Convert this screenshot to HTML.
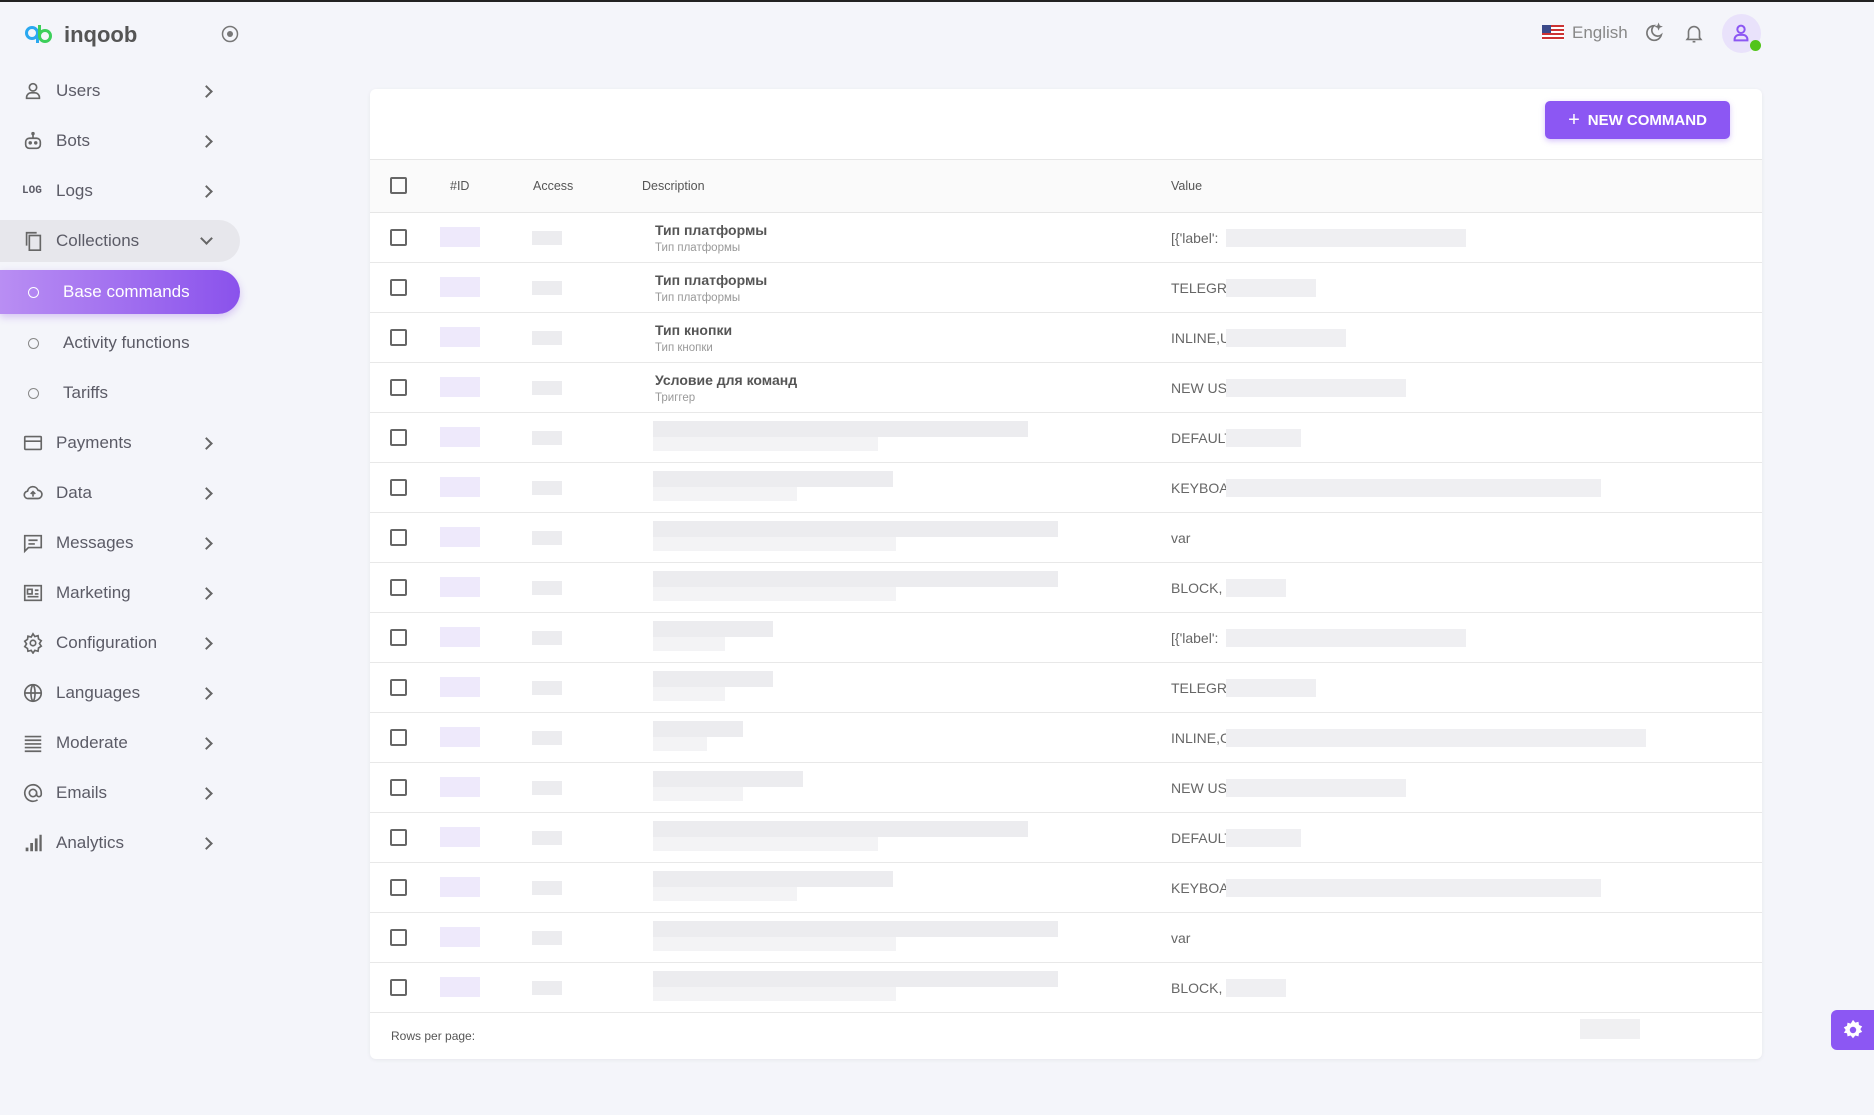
<!DOCTYPE html>
<html><head><meta charset="utf-8"><style>
*{box-sizing:border-box;margin:0;padding:0}
body{width:1874px;height:1115px;background:#f4f5fa;font-family:"Liberation Sans","Noto Sans CJK SC",sans-serif;position:relative;overflow:hidden;color:#4b4b55}
.topline{position:absolute;left:0;top:0;width:1874px;height:2px;background:#222}
.logo{position:absolute;left:24px;top:22px;display:flex;align-items:center;gap:10px;font-weight:bold;font-size:22px;color:#555}
.nav{position:absolute;left:0;top:66px;width:240px}
.it{height:50px;display:flex;align-items:center;padding-left:22px;font-size:17px;color:#5b5b66;position:relative}
.it svg{width:22px;height:22px;margin-right:12px}
.it .ch{position:absolute;left:202px;top:21px;width:9px;height:9px;border-right:2px solid #666;border-top:2px solid #666;transform:rotate(45deg)}
.coll{background:#e7e7ec;border-radius:0 25px 25px 0;height:42px;margin:4px 0}
.coll .ch{transform:rotate(135deg);top:14px}
.base{background:linear-gradient(90deg,#b98ef3,#8a52ec);border-radius:0 26px 26px 0;height:44px;color:#fff;box-shadow:0 3px 8px rgba(140,80,230,.3);margin:8px 0 4px}
.sub{padding-left:28px}
.sub .dot{width:11px;height:11px;border:1.5px solid #888;border-radius:50%;margin-right:24px}
.base .dot{border-color:#fff}
.card{position:absolute;left:370px;top:89px;width:1392px;height:970px;background:#fff;border-radius:6px;box-shadow:0 1px 4px rgba(0,0,0,.06)}
.btn{position:absolute;left:1175px;top:12px;width:185px;height:38px;background:#8c57f3;border-radius:5px;color:#fff;font-weight:bold;font-size:15px;display:flex;align-items:center;justify-content:center;gap:8px;box-shadow:0 2px 6px rgba(140,87,243,.35)}
.thead{position:absolute;left:0;top:70px;width:1392px;height:54px;background:#fafafa;border-top:1px solid #e6e6e6;border-bottom:1px solid #e6e6e6;font-size:12.5px;color:#555}
.thead span{position:absolute;top:19px}
.cb{position:absolute;left:20px;width:17px;height:17px;border:2px solid #666;border-radius:2px}
.row{position:absolute;left:0;width:1392px;height:50px;border-bottom:1px solid #e8e8e8;font-size:14px}
.t1{position:absolute;left:285px;top:9px;font-weight:bold;color:#555;font-size:14px}
.t2{position:absolute;left:285px;top:29px;color:#999;font-size:11.5px}
.val{position:absolute;left:801px;top:17px;color:#666;font-size:14px}
.b{position:absolute;background:#ececef}
.footer{position:absolute;left:21px;top:940px;font-size:12px;color:#555}
</style></head><body>
<div class="topline"></div>
<div class="logo"><svg width="30" height="24" viewBox="0 0 30 24"><circle cx="8" cy="10" r="5.5" fill="none" stroke="#2aa8f0" stroke-width="3"/><path d="M13.5 10v10" stroke="#2aa8f0" stroke-width="3"/><circle cx="21" cy="13" r="5.5" fill="none" stroke="#3ccf5a" stroke-width="3"/><path d="M15.5 2v11" stroke="#3ccf5a" stroke-width="3"/></svg>inqoob</div>
<svg style="position:absolute;left:221px;top:25px" width="18" height="18" viewBox="0 0 18 18"><circle cx="9" cy="9" r="7.5" fill="none" stroke="#777" stroke-width="1.5"/><circle cx="9" cy="9" r="3" fill="#777"/></svg>
<div class="nav">
<div class="it"><svg viewBox="0 0 24 24" fill="none" stroke="#666" stroke-width="1.8"><circle cx="12" cy="8" r="4"/><path d="M5 20v-1a5 5 0 015-5h4a5 5 0 015 5v1z"/></svg>Users<i class="ch"></i></div>
<div class="it"><svg viewBox="0 0 24 24" fill="none" stroke="#666" stroke-width="1.8"><rect x="4" y="9" width="16" height="11" rx="4"/><path d="M12 9V5"/><circle cx="12" cy="4" r="1"/><circle cx="9" cy="14" r="1" fill="#666"/><circle cx="15" cy="14" r="1" fill="#666"/></svg>Bots<i class="ch"></i></div>
<div class="it"><span style="font-size:11px;font-weight:bold;font-family:'Liberation Mono',monospace;width:22px;margin-right:12px">LOG</span>Logs<i class="ch"></i></div>
<div class="it coll"><svg viewBox="0 0 24 24" fill="none" stroke="#666" stroke-width="1.8"><path d="M5 17V3h11"/><rect x="8" y="6" width="12" height="16"/></svg>Collections<i class="ch"></i></div>
<div class="it sub base"><i class="dot"></i>Base commands</div>
<div class="it sub"><i class="dot"></i>Activity functions</div>
<div class="it sub"><i class="dot"></i>Tariffs</div>
<div class="it"><svg viewBox="0 0 24 24" fill="none" stroke="#666" stroke-width="1.8"><rect x="3" y="5" width="18" height="14" rx="1"/><path d="M3 10h18"/></svg>Payments<i class="ch"></i></div>
<div class="it"><svg viewBox="0 0 24 24" fill="none" stroke="#666" stroke-width="1.8"><path d="M7 18a4 4 0 01-1-8 6 6 0 0111.5-1A4.5 4.5 0 0117 18z"/><path d="M12 16v-5M9.5 13l2.5-2.5 2.5 2.5"/></svg>Data<i class="ch"></i></div>
<div class="it"><svg viewBox="0 0 24 24" fill="none" stroke="#666" stroke-width="1.8"><path d="M3 4h18v13H7l-4 4z"/><path d="M7 9h10M7 13h7"/></svg>Messages<i class="ch"></i></div>
<div class="it"><svg viewBox="0 0 24 24" fill="none" stroke="#666" stroke-width="1.8"><rect x="3" y="4" width="18" height="16"/><rect x="6" y="8" width="5" height="5"/><path d="M14 9h4M14 13h4M6 16h12"/></svg>Marketing<i class="ch"></i></div>
<div class="it"><svg viewBox="0 0 24 24" fill="none" stroke="#666" stroke-width="1.8"><circle cx="12" cy="12" r="3"/><path d="M12 2l2 3 3.5-1 .5 3.5 3 2-2 3 2 3-3 2-.5 3.5-3.5-1-2 3-2-3-3.5 1L6 18l-3-2 2-3-2-3 3-2 .5-3.5 3.5 1z"/></svg>Configuration<i class="ch"></i></div>
<div class="it"><svg viewBox="0 0 24 24" fill="none" stroke="#666" stroke-width="1.8"><circle cx="12" cy="12" r="9"/><path d="M3 12h18M12 3c3 3 3 15 0 18M12 3c-3 3-3 15 0 18"/></svg>Languages<i class="ch"></i></div>
<div class="it"><svg viewBox="0 0 24 24" fill="none" stroke="#666" stroke-width="1.8"><path d="M3 5h18M3 9h18M3 13h18M3 17h18M3 21h18"/></svg>Moderate<i class="ch"></i></div>
<div class="it"><svg viewBox="0 0 24 24" fill="none" stroke="#666" stroke-width="1.8"><circle cx="12" cy="12" r="4"/><path d="M16 12v1.5a2.5 2.5 0 005 0V12a9 9 0 10-4 7.5"/></svg>Emails<i class="ch"></i></div>
<div class="it"><svg viewBox="0 0 24 24" fill="#666"><rect x="4" y="17" width="3" height="4"/><rect x="9" y="12" width="3" height="9"/><rect x="14" y="7" width="3" height="14"/><rect x="19" y="3" width="2.5" height="18"/></svg>Analytics<i class="ch"></i></div>
</div>
<svg style="position:absolute;left:1542px;top:25px" width="22" height="15" viewBox="0 0 22 15"><rect width="22" height="15" fill="#fff"/><g fill="#c33"><rect y="0" width="22" height="2"/><rect y="4" width="22" height="2"/><rect y="8" width="22" height="2"/><rect y="12" width="22" height="2"/></g><rect width="9" height="8" fill="#3c4a8a"/></svg>
<div style="position:absolute;left:1572px;top:23px;font-size:17px;color:#888">English</div>
<svg style="position:absolute;left:1643px;top:21px" width="22" height="24" viewBox="0 0 24 24" fill="none" stroke="#777" stroke-width="1.8"><path d="M12 4a8 8 0 108 10 6 6 0 01-8-10z"/><path d="M17 3l.6 1.5L19 5l-1.4.5L17 7l-.6-1.5L15 5l1.4-.5z"/></svg>
<svg style="position:absolute;left:1683px;top:21px" width="22" height="24" viewBox="0 0 24 24" fill="none" stroke="#777" stroke-width="1.8"><path d="M6 17V11a6 6 0 0112 0v6l1.5 2h-15z"/><path d="M10.5 21.5h3"/></svg>
<div style="position:absolute;left:1722px;top:14px;width:39px;height:39px;border-radius:50%;background:#e9e2fb"></div>
<svg style="position:absolute;left:1730px;top:22px" width="22" height="22" viewBox="0 0 24 24" fill="none" stroke="#8c57f3" stroke-width="2.2"><circle cx="12" cy="8" r="4"/><path d="M5 20v-1a5 5 0 015-5h4a5 5 0 015 5v1z"/></svg>
<div style="position:absolute;left:1750px;top:40px;width:11px;height:11px;border-radius:50%;background:#52c41a"></div>
<div class="card">
<div class="btn"><span style="font-size:20px;font-weight:normal">+</span>NEW COMMAND</div>
<div class="thead"><i class="cb" style="top:17px"></i><span style="left:80px">#ID</span><span style="left:163px">Access</span><span style="left:272px">Description</span><span style="left:801px">Value</span></div>
<div id="rows"></div>
<div class="footer">Rows per page:</div>
<div class="b" style="left:1210px;top:930px;width:60px;height:20px;background:#f0f0f2"></div>
</div>
<div style="position:absolute;left:1831px;top:1010px;width:43px;height:40px;background:#8c57f3;border-radius:6px 0 0 6px;display:flex;align-items:center;justify-content:center"><svg width="22" height="22" viewBox="0 0 24 24" fill="#fff"><path d="M12 1l2.5 3 3.5-1 .5 3.5 3.5 1.5-2 3 2 3-3.5 1.5-.5 3.5-3.5-1-2.5 3-2.5-3-3.5 1-.5-3.5L2 15l2-3-2-3 3.5-1.5L6 4l3.5 1z"/><circle cx="12" cy="12" r="3.5" fill="#8c57f3"/></svg></div>
<script>
var t=[["Тип платформы","Тип платформы","[{'label':",240],["Тип платформы","Тип платформы","TELEGR",90],["Тип кнопки","Тип кнопки","INLINE,U",120],["Условие для команд","Триггер","NEW US",180],[0,375,"DEFAULT",75],[0,240,"KEYBOA",375],[0,405,"var",0],[0,405,"BLOCK,",60],[0,120,"[{'label':",240],[0,120,"TELEGR",90],[0,90,"INLINE,C",420],[0,150,"NEW US",180],[0,375,"DEFAULT",75],[0,240,"KEYBOA",375],[0,405,"var",0],[0,405,"BLOCK,",60]];
var h="";t.forEach(function(r,i){var y=124+i*50;h+='<div class="row" style="top:'+y+'px"><i class="cb" style="top:16px"></i><div class="b" style="left:70px;top:14px;width:40px;height:20px;background:#eee9fb"></div><div class="b" style="left:162px;top:18px;width:30px;height:14px"></div>';
if(r[0]){h+='<div class="t1">'+r[0]+'</div><div class="t2">'+r[1]+'</div>'}else{h+='<div class="b" style="left:283px;top:8px;width:'+r[1]+'px;height:16px"></div><div class="b" style="left:283px;top:24px;width:'+Math.round(r[1]*0.6)+'px;height:14px;background:#f3f3f5"></div>'}
h+='<div class="val">'+r[2]+'</div>';if(r[3])h+='<div class="b" style="left:856px;top:16px;width:'+r[3]+'px;height:18px;background:#efeff2"></div>';h+='</div>'});
document.getElementById("rows").innerHTML=h;
</script>
</body></html>
